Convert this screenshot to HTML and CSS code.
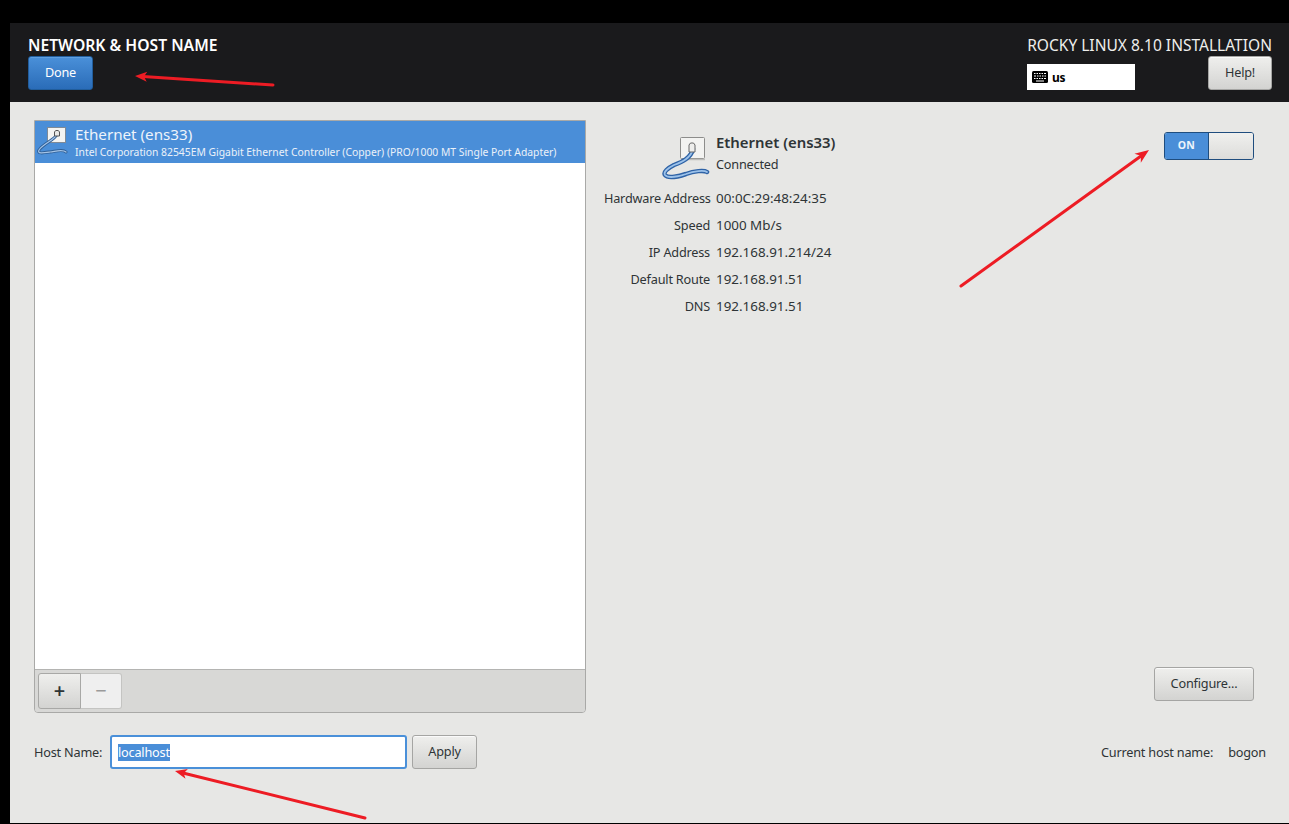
FILE: index.html
```html
<!DOCTYPE html>
<html lang="en">
<head>
<meta charset="utf-8">
<title>Network &amp; Host Name</title>
<link rel="stylesheet" href="styles.css">
</head>
<body>
<div class="window">
  <header class="header">
    <div class="header-left">
      <h1 class="title">NETWORK &amp; HOST NAME</h1>
      <button class="btn btn-done">Done</button>
    </div>
    <div class="header-right">
      <div class="product">ROCKY LINUX 8.10 INSTALLATION</div>
      <div class="header-controls">
        <div class="layout">
          <svg class="kbd" width="16" height="12" viewBox="0 0 16 12"><rect width="16" height="12" rx="1.5" fill="#000"/><path d="M2 2.5h1.500M4.500 2.500h1.500M7 2.500h1.500M9.500 2.500h1.500M12 2.500h2M2 5h2M5 5h1.500M7.500 5h1.500M10 5h1.500M12.500 5h1.500M2 7.500h1.500M4.500 7.500h1.500M7 7.500h1.500M9.500 7.500h1.500M12 7.500h2M4 10h8" stroke="#fff" stroke-width="1.100" fill="none"/></svg>
          <span>us</span>
        </div>
        <button class="btn btn-help">Help!</button>
      </div>
    </div>
  </header>
  <main class="main">
    <div class="columns">
      <section class="panel">
        <div class="device-list">
          <div class="device-row">
            <svg class="row-icon" width="34" height="32" viewBox="0 0 34 32">
              <rect x="10.500" y="1.500" width="18" height="15" fill="#f4f4f2" stroke="#7f8a96"/>
              <path d="M20 8C18 14 7 17 2 24C0 28 6 27 13 26C20 25 26 23 29 26" fill="none" stroke="#2f5f96" stroke-width="3" stroke-linecap="round"/>
              <path d="M20 8C18 14 7 17 2 24C0 28 6 27 13 26C20 25 26 23 29 26" fill="none" stroke="#a4c4e8" stroke-width="1.200" stroke-linecap="round"/>
              <path d="M17.500 10V6l1.200-1.500h2.600L22.500 6v4z" fill="#e8e8e6" stroke="#555"/>
            </svg>
            <div class="row-text">
              <div class="row-name">Ethernet (ens33)</div>
              <div class="row-desc">Intel Corporation 82545EM Gigabit Ethernet Controller (Copper) (PRO/1000 MT Single Port Adapter)</div>
            </div>
          </div>
        </div>
        <div class="toolbar">
          <div class="toolbar-group">
            <button class="tool tool-add">+</button>
            <button class="tool tool-remove">&#8722;</button>
          </div>
        </div>
      </section>
      <section class="details">
        <div class="details-top">
          <div class="info">
            <div class="info-head">
              <svg class="dev-icon" width="56" height="50" viewBox="0 0 56 50">
                <rect x="20.500" y="5.500" width="24" height="21" rx="1" fill="#f3f3f1" stroke="#8d8d8b"/>
                <path d="M21 27.500H45" stroke="#bdbdbb" stroke-width="1.500"/>
                <path d="M33 17C31 26 22 30 14 33C8 36 3 40 5 43C8 47 20 44 26 42C34 39 44 38 47 40" fill="none" stroke="#2f63a6" stroke-width="4.500" stroke-linecap="round"/>
                <path d="M33 17C31 26 22 30 14 33C8 36 3 40 5 43C8 47 20 44 26 42C34 39 44 38 47 40" fill="none" stroke="#9cc2ea" stroke-width="1.800" stroke-linecap="round"/>
                <path d="M29 20V13l1.500-2h3l1.500 2v7z" fill="#eeeeec" stroke="#666"/>
              </svg>
              <div class="info-name">
                <div class="info-title">Ethernet (ens33)</div>
                <div class="info-status">Connected</div>
              </div>
            </div>
            <dl class="props">
              <dt>Hardware Address</dt><dd>00:0C:29:48:24:35</dd>
              <dt>Speed</dt><dd>1000 Mb/s</dd>
              <dt>IP Address</dt><dd>192.168.91.214/24</dd>
              <dt>Default Route</dt><dd>192.168.91.51</dd>
              <dt>DNS</dt><dd>192.168.91.51</dd>
            </dl>
          </div>
          <div class="switch"><span class="switch-on">ON</span><span class="switch-knob"></span></div>
        </div>
        <div class="details-bottom"><button class="btn btn-config">Configure...</button></div>
      </section>
    </div>
    <div class="hostbar">
      <label class="host-label">Host Name:</label>
      <div class="host-input"><span class="selected">localhost</span></div>
      <button class="btn btn-apply">Apply</button>
      <div class="current"><span>Current host name:</span><span>bogon</span></div>
    </div>
  </main>
</div>
<svg class="annotations" width="1289" height="824" viewBox="0 0 1289 824">
  <g fill="#ed1c24" stroke="none">
    <path d="M144 76.600L146.700 81.800L135 76L147.300 71.800Z"/>
    <path d="M1140.900 155.800L1140.800 162.700L1149 150L1134.400 153.700Z"/>
    <path d="M183.700 773.200L185.500 778.800L175 771L187.900 769Z"/>
  </g>
  <g stroke="#ed1c24" stroke-width="3" fill="none" stroke-linecap="round">
    <path d="M143 76.600L273 85"/>
    <path d="M1141 156L961 286"/>
    <path d="M183 773L365 818"/>
  </g>
</svg>
</body>
</html>
```
FILE: styles.css
```css
* { box-sizing: border-box; }
html, body { margin: 0; height: 100%; }
body {
  background: #000;
  padding: 23px 0 1px 10px;
  height: 824px;
  overflow: hidden;
  font-family: "Noto Sans", "DejaVu Sans", sans-serif;
  font-size: 12.700px;
  letter-spacing: -0.2px;
  color: #2e3436;
}
.window {
  height: 800px;
  background: #e7e7e5;
  display: flex;
  flex-direction: column;
}
.header {
  height: 79px;
  background: #1a1a1c;
  display: flex;
  justify-content: space-between;
  padding: 12px 17px 0 18px;
}
.title {
  margin: 0 0 1px;
  font-size: 15.700px;
  line-height: 20px;
  font-weight: 600;
  letter-spacing: 0;
  color: #fff;
  white-space: nowrap;
}
.btn {
  font: inherit;
  letter-spacing: inherit;
  border-radius: 3px;
  border: 1px solid #a5a5a3;
  background: linear-gradient(#efefed, #d3d3d1);
  color: #2e3436;
  height: 34px;
  padding: 0 0 2px;
  box-shadow: inset 0 1px 0 #fafafa;
}
.btn-done {
  display: block;
  width: 65px;
  background: linear-gradient(#4a90d9, #2a6cb8);
  border-color: #215d9c;
  color: #fff;
  box-shadow: inset 0 1px 0 #5f9fe0;
}
.header-right { width: 245px; }
.product {
  color: #eeeeec;
  font-size: 15.550px;
  line-height: 20px;
  letter-spacing: 0;
  margin-bottom: 1px;
  white-space: nowrap;
  text-align: right;
}
.header-controls { display: flex; justify-content: space-between; align-items: flex-end; height: 34px; }
.layout {
  width: 108px;
  height: 26px;
  background: #fff;
  color: #000;
  display: flex;
  align-items: center;
  gap: 4px;
  padding-left: 5px;
  font-size: 12px;
  font-weight: 700;
}
.btn-help { width: 64px; }
.main {
  flex: 1;
  display: flex;
  flex-direction: column;
  padding: 18px 18px 0 24px;
}
.columns { display: flex; height: 593px; }
.panel {
  width: 552px;
  height: 593px;
  border: 1px solid #a9a9a7;
  border-radius: 0 0 4px 4px;
  display: flex;
  flex-direction: column;
  overflow: hidden;
}
.device-list { flex: 1; background: #fff; }
.device-row {
  height: 42px;
  background: #4a8ed8;
  color: #fff;
  display: flex;
  padding-left: 2px;
}
.row-icon { margin-top: 5px; flex: none; }
.row-text { margin-left: 4px; padding-top: 4px; white-space: nowrap; }
.row-name { font-size: 15.200px; line-height: 19px; letter-spacing: 0; color: #eef4fb; }
.row-desc { font-size: 10.350px; line-height: 16px; letter-spacing: 0; color: #eaf1f9; }
.toolbar {
  height: 43px;
  background: #d8d8d6;
  border-top: 1px solid #b4b4b2;
  padding: 3px;
}
.toolbar-group { display: flex; width: 84px; height: 36px; }
.tool { height: 36px; padding: 0; font: inherit; font-size: 20px; line-height: 1; }
.tool-add {
  width: 43px;
  border: 1px solid #a8a8a6;
  border-radius: 3px 0 0 3px;
  background: linear-gradient(#efefed, #d3d3d1);
  color: #2e3436;
  font-weight: 600;
}
.tool-remove {
  width: 41px;
  border: 1px solid #c4c4c2;
  border-left: 0;
  border-radius: 0 3px 3px 0;
  background: #efefef;
  color: #9a9a9a;
}
.details { flex: 1; display: flex; flex-direction: column; padding-left: 18px; position: relative; }
.details-top { flex: 1; display: flex; justify-content: space-between; align-items: flex-start; padding: 12px 17px 0 0; }
.info-head { display: flex; margin-bottom: 3px; height: 50px; }
.dev-icon { margin-left: 56px; flex: none; }
.info-name { padding-top: 0; }
.info-title { font-weight: 600; font-size: 14.900px; line-height: 20px; letter-spacing: 0; }
.info-status { margin-top: 3px; line-height: 18px; }
.props {
  margin: 0;
  display: grid;
  grid-template-columns: 106px auto;
  column-gap: 6px;
  grid-auto-rows: 27px;
  line-height: 27px;
  white-space: nowrap;
}
.props dt { text-align: right; }
.props dd { margin: 0; font-size: 13.400px; letter-spacing: 0; }
.switch {
  width: 90px;
  height: 28px;
  border: 1px solid #1f4d7e;
  border-radius: 3px;
  display: flex;
  overflow: hidden;
}
.switch-on {
  width: 43px;
  background: #4a8ed8;
  color: #eef4fb;
  font-size: 10.500px;
  font-weight: 700;
  letter-spacing: 0.3px;
  text-align: center;
  line-height: 24px;
}
.switch-knob {
  flex: 1;
  border-left: 1px solid #1f4d7e;
  background: linear-gradient(#f0f0ee, #dcdcda);
}
.details-bottom { display: flex; justify-content: flex-end; padding: 0 17px 12px 0; }
.btn-config { width: 100px; }
.hostbar { display: flex; align-items: center; height: 34px; margin-top: 22px; }
.host-label { width: 76px; }
.host-input {
  width: 297px;
  height: 34px;
  border: 2px solid #4a90d9;
  border-radius: 3px;
  background: #fff;
  padding: 0 0 0 6px;
  display: flex;
  align-items: center;
}
.selected { background: #4a8ed8; color: #fff; line-height: 17px; }
.btn-apply { width: 65px; margin-left: 5px; }
.current { margin-left: auto; display: flex; gap: 15px; padding-right: 5px; }
.annotations { position: absolute; left: 0; top: 0; pointer-events: none; }
```
